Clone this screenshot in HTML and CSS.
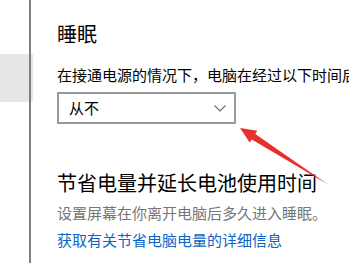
FILE: index.html
```html
<!DOCTYPE html>
<html lang="zh-CN">
<head>
<meta charset="utf-8">
<title>电源和睡眠</title>
<link rel="stylesheet" href="styles.css">
</head>
<body>
<div class="app">
  <nav class="sidebar">
    <div class="nav-item"></div>
    <div class="scrollbar"></div>
  </nav>
  <main class="content">
    <h2 class="title first">睡眠</h2>
    <p class="label">在接通电源的情况下，电脑在经过以下时间后进入睡眠状态</p>
    <div class="select">
      <span class="select-value">从不</span>
      <svg class="chevron" width="12" height="7" viewBox="0 0 12 7"><path d="M0.5 0.5 L6 6 L11.5 0.5" fill="none" stroke="#6b6b6b" stroke-width="1.1"/></svg>
    </div>
    <h2 class="title second">节省电量并延长电池使用时间</h2>
    <p class="hint">设置屏幕在你离开电脑后多久进入睡眠。</p>
    <a class="link" href="#">获取有关节省电脑电量的详细信息</a>
  </main>
  <svg class="annotation" width="349" height="263" viewBox="0 0 349 263">
    <polygon points="240,128 257.3,130.7 255.3,134 328,184.5 251.8,139.4 249.7,142.5" fill="#e8312c"/>
  </svg>
</div>
</body>
</html>
```
FILE: styles.css
```css
html, body {
  margin: 0;
  padding: 0;
  background: #ffffff;
}
body {
  width: 349px;
  height: 263px;
  overflow: hidden;
  font-family: "Noto Sans CJK SC", "Noto Sans", sans-serif;
  color: #000000;
}
.app {
  position: relative;
  display: flex;
  width: 349px;
  height: 263px;
}
.sidebar {
  position: relative;
  flex: 0 0 33px;
  width: 33px;
  padding-top: 54px;
  box-sizing: border-box;
}
.nav-item {
  height: 48px;
  background: #e6e6e6;
}
.scrollbar {
  position: absolute;
  left: 29px;
  top: 0;
  width: 2px;
  height: 263px;
  background: #7f7f7f;
}
.content {
  flex: 1 1 auto;
  padding: 24px 0 0 24px;
  white-space: nowrap;
  overflow: hidden;
}
.title {
  margin: 0;
  font-size: 20px;
  line-height: 20px;
  font-weight: 400;
}
.label {
  margin: 21px 0 0 0;
  font-size: 15px;
  line-height: 20px;
}
.select {
  margin-top: 7px;
  width: 179px;
  height: 32px;
  box-sizing: border-box;
  border: 2px solid #999999;
  display: flex;
  align-items: center;
  justify-content: space-between;
  padding: 0 8px 0 10px;
}
.select-value {
  font-size: 15px;
  line-height: 20px;
}
.chevron {
  display: block;
}
.second {
  margin-top: 49px;
}
.hint {
  margin: 10px 0 0 0;
  font-size: 15px;
  line-height: 20px;
  color: #767676;
}
.link {
  display: block;
  margin-top: 7px;
  font-size: 15px;
  line-height: 20px;
  color: #0a66c8;
  text-decoration: none;
}
.annotation {
  position: absolute;
  left: 0;
  top: 0;
  pointer-events: none;
}
```
